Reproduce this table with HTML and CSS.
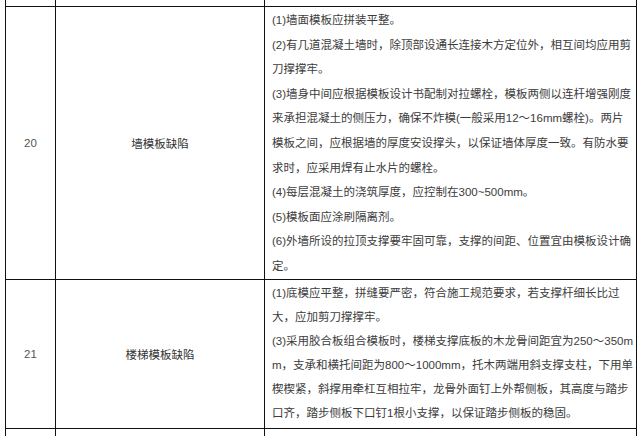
FILE: index.html
```html
<!DOCTYPE html>
<html lang="zh-CN">
<head>
<meta charset="utf-8">
<title>模板缺陷</title>
<link rel="stylesheet" href="styles.css">
</head>
<body>
<table class="grid">
  <colgroup>
    <col class="c-no">
    <col class="c-name">
    <col class="c-desc">
  </colgroup>
  <tr class="stub-top"><td></td><td></td><td></td></tr>
  <tr class="row-20">
    <td class="no">20</td>
    <td class="name">墙模板缺陷</td>
    <td class="desc">
      <div>(1)墙面模板应拼装平整。</div>
      <div>(2)有几道混凝土墙时，除顶部设通长连接木方定位外，相互间均应用剪</div>
      <div>刀撑撑牢。</div>
      <div>(3)墙身中间应根据模板设计书配制对拉螺栓，模板两侧以连杆增强刚度</div>
      <div>来承担混凝土的侧压力，确保不炸模(一般采用12～16mm螺栓)。两片</div>
      <div>模板之间，应根据墙的厚度安设撑头，以保证墙体厚度一致。有防水要</div>
      <div>求时，应采用焊有止水片的螺栓。</div>
      <div>(4)每层混凝土的浇筑厚度，应控制在300~500mm。</div>
      <div>(5)模板面应涂刷隔离剂。</div>
      <div>(6)外墙所设的拉顶支撑要牢固可靠，支撑的间距、位置宜由模板设计确</div>
      <div>定。</div>
    </td>
  </tr>
  <tr class="row-21">
    <td class="no">21</td>
    <td class="name">楼梯模板缺陷</td>
    <td class="desc">
      <div>(1)底模应平整，拼缝要严密，符合施工规范要求，若支撑杆细长比过</div>
      <div>大，应加剪刀撑撑牢。</div>
      <div>(3)采用胶合板组合模板时，楼梯支撑底板的木龙骨间距宜为250～350m</div>
      <div>m，支承和横托间距为800～1000mm，托木两端用斜支撑支柱，下用单</div>
      <div>楔楔紧，斜撑用牵杠互相拉牢，龙骨外面钉上外帮侧板，其高度与踏步</div>
      <div>口齐，踏步侧板下口钉1根小支撑，以保证踏步侧板的稳固。</div>
    </td>
  </tr>
  <tr class="stub-bottom"><td></td><td></td><td></td></tr>
</table>
</body>
</html>
```

FILE: styles.css
```css
html, body {
  margin: 0;
  padding: 0;
  background: #ffffff;
}

body {
  width: 641px;
  height: 436px;
  overflow: hidden;
  font-family: "Liberation Sans", "Noto Sans CJK SC", sans-serif;
  font-size: 11.5px;
  color: #3c3c3c;
}

.grid {
  border-collapse: collapse;
  margin-left: 5px;
  table-layout: fixed;
  width: 631px;
}

.c-no { width: 50px; }
.c-name { width: 209px; }
.c-desc { width: 372px; }

.grid td {
  border: 1px solid #111111;
  padding: 0;
}

.stub-top td {
  height: 6px;
  border-top: none;
}

.stub-bottom td {
  height: 20px;
  border-bottom: none;
}

.no,
.name {
  text-align: center;
  vertical-align: middle;
}

.no {
  color: #555555;
}

.name {
  color: #333333;
}

.desc {
  vertical-align: top;
  padding-left: 7px !important;
  white-space: nowrap;
}

.row-20 td {
  height: 270px;
}

.row-20 .desc {
  padding-top: 1px !important;
  line-height: 24.6px;
}

.row-21 td {
  height: 147px;
}

.row-21 .desc {
  padding-top: 1px !important;
  line-height: 24.1px;
}
```
